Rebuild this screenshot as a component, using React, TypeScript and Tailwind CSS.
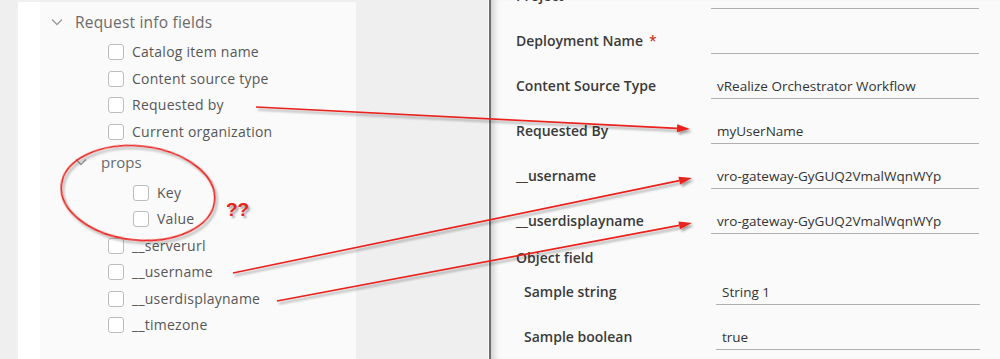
import type { ReactNode } from 'react';

const font = { fontFamily: '"Open Sans", "Liberation Sans", sans-serif' };

function Chevron({ className = '' }: { className?: string }) {
  return (
    <svg width="12" height="8" viewBox="0 0 12 8" className={className}>
      <polyline points="1,1.5 6,6.5 11,1.5" fill="none" stroke="#9a9a9a" strokeWidth="1.3" />
    </svg>
  );
}

function CheckRow({ label, indent = false, className = '' }: { label: string; indent?: boolean; className?: string }) {
  return (
    <div className={`flex items-center h-[26.5px] ${indent ? 'pl-[93px]' : 'pl-[68px]'} ${className}`}>
      <span className="w-4 h-4 rounded-[3px] border border-[#bdbdbd] bg-white shrink-0" />
      <span className="ml-[8px] text-[14px] tracking-[0.25px] text-[#575757] leading-5">{label}</span>
    </div>
  );
}

function FieldRow({
  label,
  value,
  required = false,
  nested = false,
  short = false,
}: {
  label: ReactNode;
  value?: string;
  required?: boolean;
  nested?: boolean;
  short?: boolean;
}) {
  return (
    <div className={`flex items-end ${short ? 'h-[37px]' : 'h-[45px]'}`}>
      <div className={`${nested ? 'w-[192px]' : 'w-[195px]'} mb-[3px] leading-5 text-[14px] font-semibold text-[#3a3a3a]`}>
        {label}
        {required && <span className="text-[#c92100] ml-[6px] font-normal">*</span>}
      </div>
      <div
        className={`${nested ? 'w-[264px]' : 'w-[268px]'} h-[24px] border-b-[1.5px] border-[#b0b0b0] pl-[6px] pb-[2px] flex items-end text-[13.5px] leading-5 text-[#333]`}
      >
        {value}
      </div>
    </div>
  );
}

function Annotations() {
  const red = '#e8201c';
  const arrows = [
    { x1: 256, y1: 107, x2: 690, y2: 129 },
    { x1: 233, y1: 273, x2: 692, y2: 178 },
    { x1: 277, y1: 301, x2: 692, y2: 223 },
  ];
  return (
    <svg className="absolute inset-0 pointer-events-none" width="1000" height="359" viewBox="0 0 1000 359">
      <defs>
        <filter id="sh" x="-10%" y="-10%" width="120%" height="140%">
          <feDropShadow dx="2" dy="2.5" stdDeviation="1.2" floodColor="#000" floodOpacity="0.35" />
        </filter>
      </defs>
      <g filter="url(#sh)">
        {arrows.map((a, i) => {
          const ang = Math.atan2(a.y2 - a.y1, a.x2 - a.x1);
          const len = 13;
          const w = 4;
          const bx = a.x2 - len * Math.cos(ang);
          const by = a.y2 - len * Math.sin(ang);
          const px = -Math.sin(ang) * w;
          const py = Math.cos(ang) * w;
          return (
            <g key={i}>
              <line x1={a.x1} y1={a.y1} x2={bx} y2={by} stroke={red} strokeWidth="1.6" />
              <polygon points={`${a.x2},${a.y2} ${bx + px},${by + py} ${bx - px},${by - py}`} fill={red} />
            </g>
          );
        })}
        <ellipse cx="138" cy="193" rx="77" ry="47" fill="none" stroke={red} strokeWidth="1.6" transform="rotate(6 138 193)" />
      </g>
    </svg>
  );
}

export default function App() {
  return (
    <div className="relative w-[1000px] h-[359px] overflow-hidden flex bg-[#efefef]" style={font}>
      <div className="w-[18px] shrink-0" />
      <div className="w-[22px] shrink-0 mt-[2px] bg-white" />
      <div className="w-[316px] shrink-0 mt-[2px] bg-[#fafafa] pt-[10px]">
        <div className="flex items-center h-5 pl-[11px]">
          <Chevron />
          <span className="ml-[12px] text-[15.5px] tracking-[0.2px] text-[#6a6a6a] leading-5">Request info fields</span>
        </div>
        <div className="mt-[7px]">
          <CheckRow label="Catalog item name" />
          <CheckRow label="Content source type" />
          <CheckRow label="Requested by" />
          <CheckRow label="Current organization" />
          <div className="flex items-center h-[26.5px] pl-[35px] mt-[4px]">
            <Chevron />
            <span className="ml-[14px] text-[15px] text-[#6a6a6a] leading-5">props</span>
          </div>
          <div className="relative mt-[4px]">
            <CheckRow label="Key" indent />
            <CheckRow label="Value" indent />
            <span
              className="absolute left-[186px] top-[20px] text-[19px] font-bold text-[#e8201c] leading-5 [text-shadow:2px_2px_2px_rgba(0,0,0,0.35)]"
              style={{ fontFamily: '"Liberation Sans", sans-serif' }}
            >
              ??
            </span>
          </div>
          <CheckRow label="__serverurl" />
          <CheckRow label="__username" />
          <CheckRow label="__userdisplayname" />
          <CheckRow label="__timezone" />
        </div>
      </div>
      <div className="w-[132px] shrink-0 bg-[#efefef]" />
      <div className="w-px shrink-0 bg-[#fafafa]" />
      <div className="w-[2px] shrink-0 bg-[#6e6e6e]" />
      <div className="flex-1 bg-[#fafafa] shadow-[inset_7px_0_6px_-4px_rgba(0,0,0,0.18)] pl-[25px]">
        <div className="-mt-[36px]">
          <FieldRow label="Project" />
          <FieldRow label="Deployment Name" required />
          <FieldRow label="Content Source Type" value="vRealize Orchestrator Workflow" />
          <FieldRow label="Requested By" value="myUserName" />
          <FieldRow label="__username" value="vro-gateway-GyGUQ2VmalWqnWYp" />
          <FieldRow label="__userdisplayname" value="vro-gateway-GyGUQ2VmalWqnWYp" />
          <div className="mt-[14px] leading-5 text-[14px] font-semibold text-[#3a3a3a]">Object field</div>
          <div className="pl-[8px]">
            <FieldRow label="Sample string" value="String 1" nested short />
            <FieldRow label="Sample boolean" value="true" nested />
          </div>
        </div>
      </div>
      <Annotations />
    </div>
  );
}
